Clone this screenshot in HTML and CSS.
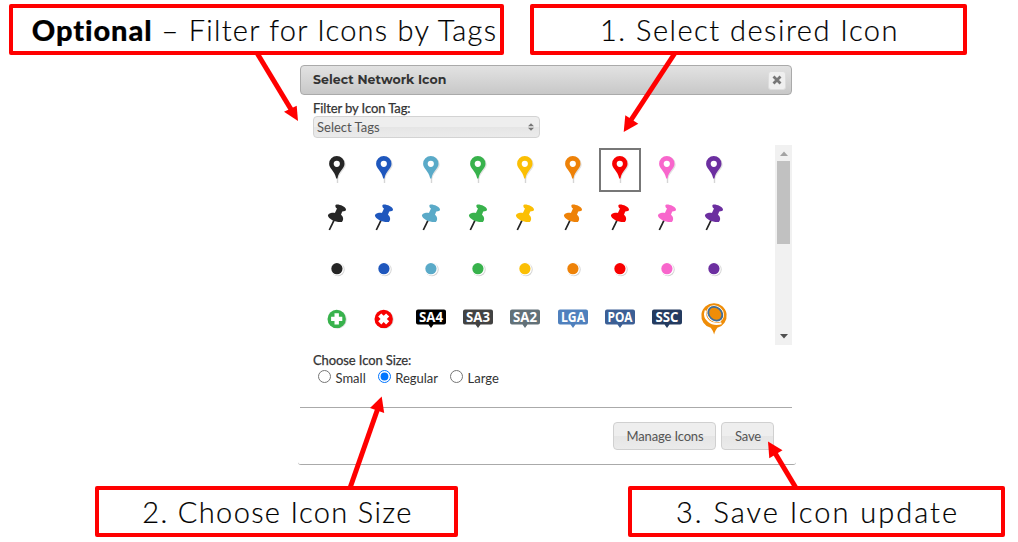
FILE: index.html
```html
<!DOCTYPE html>
<html lang="en">
<head>
    <meta charset="UTF-8">
    <meta name="viewport" content="width=device-width, initial-scale=1.0">
    <title>Select Network Icon</title>
    <link rel="stylesheet" href="styles.css">
</head>
<body>
    <!-- Icon shapes -->
    <svg class="sprite">
        <symbol id="pin" viewBox="0 0 42 44">
            <path d="M21.5 28v7" stroke="#d5d5d5" stroke-width="1.4"/>
            <path d="M22.2 8.8a7.500 7.500 0 0 1 7.500 7.600c0 5-5.600 7-7.500 14.400-1.900-7.400-7.500-9.400-7.500-14.400a7.500 7.500 0 0 1 7.500-7.600z" fill="#e2e2e2"/>
            <path fill="currentColor" d="M20.800 8.100a7.700 7.700 0 0 1 7.700 7.700c0 5-5.600 7-7.100 14.600h-1.200c-1.500-7.600-7.100-9.600-7.100-14.600a7.700 7.700 0 0 1 7.700-7.700z"/>
            <circle cx="20.800" cy="15.800" r="3.100" fill="#fff"/>
        </symbol>
        <symbol id="tack" viewBox="0 0 42 44">
            <path d="M18 22.400L13.300 32" stroke="#222" stroke-width="1.700"/>
            <path fill="currentColor" d="M19.400 7.200c.6-2.200 10.300.6 10.600 4.200 0 1.900-2.400 1.700-3.800 2L25 16.800c2.300 1.700 3 5.300.9 7.100-4.400 1-13.600-2.300-14-6.700.8-2.200 4.600-2.500 7-2.300l2.100-4.300C19.800 9.900 19.200 8.400 19.400 7.200z"/>
        </symbol>
        <symbol id="dot" viewBox="0 0 42 44">
            <circle cx="22" cy="21.500" r="6.700" fill="#d4d4d4"/>
            <circle cx="21.200" cy="20.900" r="6.600" fill="#fff"/>
            <circle cx="20.900" cy="20.700" r="5.600" fill="currentColor"/>
        </symbol>
        <symbol id="badge" viewBox="0 0 42 44">
            <circle cx="21.500" cy="21.600" r="9.200" fill="#d8d8d8"/>
            <circle cx="20.700" cy="20.900" r="9.200" fill="currentColor"/>
            <path d="M18.500 15.300h4.400v3.400h3.400v4.400h-3.400v3.400h-4.400v-3.400h-3.400v-4.400h3.400z" fill="#fff"/>
        </symbol>
        <symbol id="badge-x" viewBox="0 0 42 44">
            <circle cx="21.500" cy="21.600" r="9.200" fill="#d8d8d8"/>
            <circle cx="20.700" cy="20.900" r="9.200" fill="currentColor"/>
            <path transform="rotate(45 20.700 20.900)" d="M18.500 15.300h4.400v3.400h3.400v4.400h-3.400v3.400h-4.400v-3.400h-3.400v-4.400h3.400z" fill="#fff"/>
        </symbol>
        <symbol id="label" viewBox="0 0 42 44">
            <path fill="currentColor" d="M8 11.500h26a2 2 0 0 1 2 2v11a2 2 0 0 1-2 2H23.500L21 30l-2.500-3.500H8a2 2 0 0 1-2-2v-11a2 2 0 0 1 2-2z"/>
        </symbol>
    </svg>

    <div class="callouts callouts-top">
        <div class="callout callout-filter"><span><b>Optional</b> – Filter for Icons by Tags</span></div>
        <div class="callout callout-select"><span>1. Select desired Icon</span></div>
    </div>

    <div class="dialog">
        <div class="titlebar">
            <span class="title">Select Network Icon</span>
            <span class="close">
                <svg width="10" height="10" viewBox="0 0 10 10"><path d="M1.500 1.500l7 7M8.500 1.500l-7 7" stroke="#777" stroke-width="2.800"/></svg>
            </span>
        </div>

        <div class="content">
            <div class="field-label">Filter by Icon Tag:</div>
            <div class="tag-select">
                <span>Select Tags</span>
                <svg width="6" height="8" viewBox="0 0 6 8"><path d="M0 3.300L3 .3l3 3zM0 4.700h6l-3 3z" fill="#777"/></svg>
            </div>

            <div class="icon-list">
                <div class="icon-grid">
                    <svg class="icon black"><use href="#pin"/></svg>
                    <svg class="icon blue"><use href="#pin"/></svg>
                    <svg class="icon sky"><use href="#pin"/></svg>
                    <svg class="icon green"><use href="#pin"/></svg>
                    <svg class="icon yellow"><use href="#pin"/></svg>
                    <svg class="icon orange"><use href="#pin"/></svg>
                    <svg class="icon red selected"><use href="#pin"/></svg>
                    <svg class="icon pink"><use href="#pin"/></svg>
                    <svg class="icon purple"><use href="#pin"/></svg>

                    <svg class="icon black"><use href="#tack"/></svg>
                    <svg class="icon blue"><use href="#tack"/></svg>
                    <svg class="icon sky"><use href="#tack"/></svg>
                    <svg class="icon green"><use href="#tack"/></svg>
                    <svg class="icon yellow"><use href="#tack"/></svg>
                    <svg class="icon orange"><use href="#tack"/></svg>
                    <svg class="icon red"><use href="#tack"/></svg>
                    <svg class="icon pink"><use href="#tack"/></svg>
                    <svg class="icon purple"><use href="#tack"/></svg>

                    <svg class="icon black"><use href="#dot"/></svg>
                    <svg class="icon blue"><use href="#dot"/></svg>
                    <svg class="icon sky"><use href="#dot"/></svg>
                    <svg class="icon green"><use href="#dot"/></svg>
                    <svg class="icon yellow"><use href="#dot"/></svg>
                    <svg class="icon orange"><use href="#dot"/></svg>
                    <svg class="icon red"><use href="#dot"/></svg>
                    <svg class="icon pink"><use href="#dot"/></svg>
                    <svg class="icon purple"><use href="#dot"/></svg>

                    <svg class="icon green"><use href="#badge"/></svg>
                    <svg class="icon red"><use href="#badge-x"/></svg>
                    <svg class="icon sa4"><use href="#label"/><text x="21" y="24" textLength="24" lengthAdjust="spacingAndGlyphs">SA4</text></svg>
                    <svg class="icon sa3"><use href="#label"/><text x="21" y="24" textLength="24" lengthAdjust="spacingAndGlyphs">SA3</text></svg>
                    <svg class="icon sa2"><use href="#label"/><text x="21" y="24" textLength="24" lengthAdjust="spacingAndGlyphs">SA2</text></svg>
                    <svg class="icon lga"><use href="#label"/><text x="21" y="24" textLength="24" lengthAdjust="spacingAndGlyphs">LGA</text></svg>
                    <svg class="icon poa"><use href="#label"/><text x="21" y="24" textLength="25" lengthAdjust="spacingAndGlyphs">POA</text></svg>
                    <svg class="icon ssc"><use href="#label"/><text x="21" y="24" textLength="23" lengthAdjust="spacingAndGlyphs">SSC</text></svg>
                    <svg class="icon brand" viewBox="0 0 42 44">
                        <path fill="currentColor" d="M21 5.200a12.500 12.500 0 0 1 3.300 24.600c-1.300 1.700-2.500 4.100-3.200 6.700-.7-2.600-2-5-3.400-6.700A12.500 12.500 0 0 1 21 5.200z"/>
                        <g fill="none">
                            <path d="M12.800 12.500c-2.800 8 5 15.800 15.700 12.700" stroke="#fff" stroke-width="2.200"/>
                            <path d="M15.200 17.500c1.300 4.600 6.500 7 12.800 5.300" stroke="#fff" stroke-width="1.200"/>
                            <ellipse cx="22.300" cy="15.700" rx="8.800" ry="7.400" transform="rotate(42 22.300 15.700)" stroke="#fff" stroke-width="1"/>
                            <ellipse cx="22.300" cy="15.800" rx="7.600" ry="6.200" transform="rotate(42 22.300 15.800)" stroke="#3f6e9b" stroke-width="1.800"/>
                        </g>
                    </svg>
                </div>
                <div class="scrollbar">
                    <svg width="8" height="5" viewBox="0 0 8 5"><path d="M0 5l4-4.500L8 5z" fill="#a3a3a3"/></svg>
                    <div class="thumb"></div>
                    <svg width="8" height="5" viewBox="0 0 8 5"><path d="M0 0h8L4 4.500z" fill="#505050"/></svg>
                </div>
            </div>

            <div class="field-label">Choose Icon Size:</div>
            <div class="sizes">
                <label><input type="radio" name="size">Small</label>
                <label><input type="radio" name="size" checked>Regular</label>
                <label><input type="radio" name="size">Large</label>
            </div>
        </div>

        <div class="buttons">
            <button class="btn-manage">Manage Icons</button>
            <button class="btn-save">Save</button>
        </div>
    </div>

    <div class="callouts callouts-bottom">
        <div class="callout callout-size"><span>2. Choose Icon Size</span></div>
        <div class="callout callout-save"><span>3. Save Icon update</span></div>
    </div>

    <!-- Arrows over the dialog -->
    <svg class="arrows" width="1018" height="542" viewBox="0 0 1018 542">
        <g stroke="#f00" stroke-width="5">
            <path d="M257 53L292 111"/>
            <path d="M675 53L631 120"/>
            <path d="M350 488L378 408"/>
            <path d="M796 488L775 453"/>
        </g>
        <g fill="#f00">
            <path d="M298 121l-14-9.300 12.700-6z"/>
            <path d="M623.700 132l1.600-16.700 13 8.400z"/>
            <path d="M381.700 396.500L370 408l14.200 4.900z"/>
            <path d="M768 441.500l1.300 16.700 13.200-8z"/>
        </g>
    </svg>
</body>
</html>
```

FILE: styles.css
```css
* {
    box-sizing: border-box;
}

body {
    margin: 0;
    width: 1018px;
    height: 542px;
    background: #fff;
    font-family: Lato, sans-serif;
    font-size: 13px;
    color: #333;
    overflow: hidden;
}

.sprite {
    display: none;
}

/* callouts */
.callouts {
    display: flex;
}

.callouts-top {
    padding: 4px 0 0 9px;
    gap: 26px;
}

.callouts-bottom {
    padding: 21px 0 0 95px;
    gap: 170px;
}

.callout {
    display: flex;
    justify-content: center;
    align-items: center;
    height: 51px;
    border: 4px solid #f00;
    border-radius: 2px;
    background: #fff;
    color: #000;
    font-family: "Century Gothic", Lato, sans-serif;
    font-size: 29px;
    font-weight: 300;
    white-space: nowrap;
    -webkit-text-stroke: 0.2px #000;
}

.callout b {
    font-weight: 900;
    letter-spacing: 0.9px;
}

.callout-filter {
    width: 495px;
    padding-left: 16px;
    letter-spacing: 1.25px;
}

.callout-select {
    width: 437px;
    padding-left: 2px;
    letter-spacing: 1.5px;
}

.callout-size {
    width: 363px;
    padding-left: 2px;
    letter-spacing: 1.35px;
}

.callout-save {
    width: 377px;
    padding-left: 2px;
    letter-spacing: 2px;
}

/* dialog */
.dialog {
    width: 498px;
    height: 402px;
    margin: 8px 0 0 298px;
    padding: 2px 4px 0 2px;
    border-bottom: 1px solid #aaa;
    border-radius: 3px;
}

.titlebar {
    display: flex;
    justify-content: space-between;
    align-items: center;
    height: 30px;
    padding: 0 5px 0 12px;
    border: 1px solid #aaa;
    border-radius: 4px;
    background: linear-gradient(#e2e2e2, #c8c8c8);
}

.title {
    padding-bottom: 2px;
    font-family: Montserrat, "Open Sans", sans-serif;
    font-size: 12.5px;
    font-weight: 700;
    letter-spacing: 0.06px;
}

.close {
    display: flex;
    justify-content: center;
    align-items: center;
    width: 18px;
    height: 19px;
    border: 1px solid #ddd;
    border-radius: 3px;
    background: #efefef;
}

.content {
    height: 313px;
    padding: 6px 0 0 13px;
    border-bottom: 1px solid #aaa;
}

.field-label {
    height: 15px;
    line-height: 15px;
    letter-spacing: -0.1px;
    -webkit-text-stroke: 0.25px #333;
}

.tag-select {
    display: flex;
    justify-content: space-between;
    align-items: center;
    width: 227px;
    height: 22px;
    padding: 0 5px 0 3px;
    border: 1px solid #d3d3d3;
    border-radius: 4px;
    background: linear-gradient(#eee 50%, #e5e5e5 50%, #ebebeb);
    color: #555;
}

.icon-list {
    display: flex;
    justify-content: space-between;
    height: 200px;
    margin: 7px 0 8px;
}

.icon-grid {
    display: grid;
    grid-template-columns: repeat(9, 47.2px);
    grid-auto-rows: 50px;
    justify-items: center;
    padding-top: 3px;
}

.icon {
    width: 42px;
    height: 44px;
}

.icon text {
    fill: #fff;
    font-family: "Open Sans", sans-serif;
    font-size: 14.5px;
    font-weight: 700;
    text-anchor: middle;
}

.selected {
    outline: 2px solid #777;
    outline-offset: -2px;
}

.black { color: #262626; }
.blue { color: #1f57bd; }
.sky { color: #5aaac8; }
.green { color: #38b24c; }
.yellow { color: #fbbf04; }
.orange { color: #ee8208; }
.red { color: #f80000; }
.pink { color: #f866cc; }
.purple { color: #6c2fa0; }
.sa4 { color: #000; }
.sa3 { color: #424242; }
.sa2 { color: #627178; }
.lga { color: #4f80bd; }
.poa { color: #3c5f95; }
.ssc { color: #243b60; }
.brand { color: #ef8d08; }

.scrollbar {
    display: flex;
    flex-direction: column;
    align-items: center;
    width: 17px;
    padding: 6px 0;
    background: #f1f1f1;
}

.thumb {
    width: 13px;
    height: 83px;
    margin: 5px 0 auto;
    background: #c1c1c1;
}

.sizes {
    display: flex;
    gap: 12px;
    padding-left: 5px;
}

.sizes label {
    display: flex;
    align-items: center;
    height: 20px;
}

.sizes input {
    width: 13px;
    height: 13px;
    margin: 0 4.5px 3px 0;
}

.buttons {
    display: flex;
    justify-content: flex-end;
    gap: 5px;
    padding: 14px 18px 0 0;
}

.buttons button {
    height: 28px;
    padding: 0 0 1px 1px;
    border: 1px solid #d0d0d0;
    border-radius: 4px;
    background: linear-gradient(#eee 50%, #e5e5e5 50%, #ebebeb);
    color: #555;
    font-family: Lato, sans-serif;
    font-size: 13px;
    letter-spacing: -0.15px;
}

.btn-manage {
    width: 103px;
}

.btn-save {
    width: 53px;
}

.arrows {
    position: absolute;
    top: 0;
    left: 0;
}
```
